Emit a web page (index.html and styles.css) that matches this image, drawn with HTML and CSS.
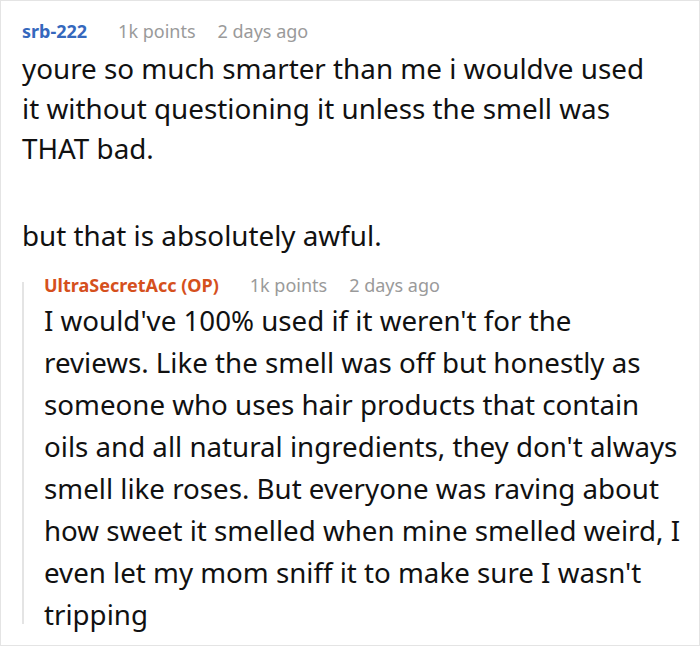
FILE: index.html
```html
<!DOCTYPE html>
<html>
<head>
<meta charset="utf-8">
<link rel="stylesheet" href="styles.css">
</head>
<body>
<div class="card">
  <div class="comment">
    <div class="meta">
      <span class="user user-blue">srb-222</span>
      <span class="info">1k points</span>
      <span class="info">2 days ago</span>
    </div>
    <div class="body body-main">
      <p>youre so much smarter than me i wouldve used it without questioning it unless the smell was THAT bad.</p>
      <p>but that is absolutely awful.</p>
    </div>
    <div class="reply">
      <div class="meta">
        <span class="user user-op">UltraSecretAcc (OP)</span>
        <span class="info">1k points</span>
        <span class="info">2 days ago</span>
      </div>
      <div class="body body-reply">
        <p>I would've 100% used if it weren't for the<br>reviews. Like the smell was off but honestly as someone who uses hair products that contain oils and all natural ingredients, they don't always smell like roses. But everyone was raving about how sweet it smelled when mine smelled weird, I even let my mom sniff it to make sure I wasn't tripping</p>
      </div>
    </div>
  </div>
</div>
</body>
</html>
```
FILE: styles.css
```css
html, body {
  margin: 0;
  padding: 0;
  background: #ffffff;
}
.card {
  box-sizing: border-box;
  width: 700px;
  height: 646px;
  border: 1px solid #e4e4e4;
  padding: 18px 10px 0 21px;
  font-family: "Noto Sans", "Open Sans", sans-serif;
  color: #111111;
  overflow: hidden;
}
.meta {
  display: flex;
  align-items: baseline;
  font-size: 18px;
  line-height: 24px;
}
.user {
  font-weight: 700;
  margin-right: 31px;
}
.user-blue { color: #3568bd; }
.user-op { color: #d5501d; }
.info {
  color: #9a9a9a;
  margin-right: 22px;
}
.body {
  font-size: 27.8px;
  line-height: 40px;
}
.body p {
  margin: 0;
}
.body-main {
  margin-top: 5px;
  margin-right: 30px;
}
.body-main p + p {
  margin-top: 47px;
}
.reply {
  position: relative;
  margin-top: 18px;
  padding-left: 22px;
}
.reply::before {
  content: "";
  position: absolute;
  left: 0;
  top: 9px;
  bottom: 11px;
  width: 2px;
  background: #e4e4e4;
}
.body-reply {
  font-size: 27.7px;
  line-height: 42px;
  margin-top: 2px;
}
```
